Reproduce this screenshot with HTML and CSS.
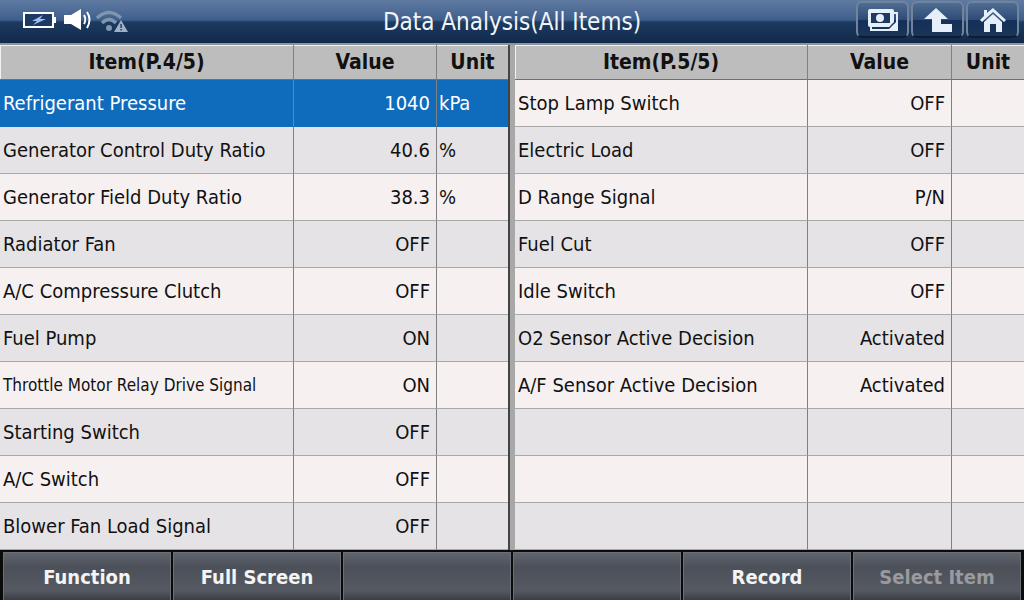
FILE: index.html
```html
<!DOCTYPE html>
<html lang="en">
<head>
<meta charset="utf-8">
<title>Data Analysis</title>
<link rel="stylesheet" href="styles.css">
</head>
<body>
<div class="app">
  <header class="topbar">
    <div class="status">
      <svg class="ic-batt" width="34" height="16" viewBox="0 0 34 16"><rect x="1" y="1" width="29" height="14" fill="#1c3a63" stroke="#fff" stroke-width="2"/><rect x="30" y="5" width="3" height="6" fill="#fff"/><path d="M20 3 L9 9 L14 9 L10 13 L23 7 L17 7 Z" fill="#9cc0f0"/></svg>
      <svg class="ic-vol" width="28" height="21" viewBox="0 0 28 21"><path d="M0 6 H7 L17 0 V21 L7 15 H0 Z" fill="#fff"/><path d="M20 6 Q22.5 10.5 20 15" fill="none" stroke="#fff" stroke-width="2"/><path d="M23 3 Q28 10.5 23 19" fill="none" stroke="#fff" stroke-width="2"/></svg>
      <svg class="ic-wifi" width="32" height="24" viewBox="0 0 32 24"><path d="M1 9 Q13 -2 25 9" fill="none" stroke="#7f95b0" stroke-width="3.5"/><path d="M6 14 Q13 7 20 14" fill="none" stroke="#7f95b0" stroke-width="3.5"/><circle cx="13" cy="19" r="3" fill="#7f95b0"/><path d="M25 11 L32 23 H18 Z" fill="#9fb1c6"/><rect x="24.400" y="15" width="1.400" height="4" fill="#1d3a60"/><rect x="24.400" y="20" width="1.400" height="1.500" fill="#1d3a60"/></svg>
    </div>
    <h1 class="title">Data Analysis(All Items)</h1>
    <nav class="tools">
      <button class="tool"><svg width="34" height="24" viewBox="0 0 34 24"><path d="M5 19 V22 H31 V5 H28" fill="none" stroke="#e4effa" stroke-width="2"/><rect x="2" y="1" width="26" height="18" rx="2" fill="#e4effa"/><rect x="5" y="5" width="19" height="10" fill="#1d3a60"/><circle cx="14" cy="10" r="4" fill="#e4effa"/><path d="M23 21 L31 13 V21 Z" fill="#e4effa"/><path d="M24 19 L29 14" stroke="#1d3a60" stroke-width="1.500"/></svg></button>
      <button class="tool"><svg width="30" height="26" viewBox="0 0 30 26"><path d="M1 12 L13 1 L25 12 H18 V17 H29 V25 H9 V12 Z" fill="#e4effa"/></svg></button>
      <button class="tool"><svg width="26" height="26" viewBox="0 0 26 26"><path d="M13 1 L26 13 L24 15 L13 5 L2 15 L0 13 L4 9 V3 H7 V6 Z" fill="#e4effa"/><path d="M4 15 L13 7 L22 15 V25 H16 V17 H10 V25 H4 Z" fill="#e4effa"/></svg></button>
    </nav>
  </header>
  <main class="tables">
    <section class="grid left">
      <div class="row head"><div class="c item">Item(P.4/5)</div><div class="c val">Value</div><div class="c unit">Unit</div></div>
      <div class="row sel"><div class="c item">Refrigerant Pressure</div><div class="c val">1040</div><div class="c unit">kPa</div></div>
      <div class="row"><div class="c item">Generator Control Duty Ratio</div><div class="c val">40.6</div><div class="c unit">%</div></div>
      <div class="row"><div class="c item">Generator Field Duty Ratio</div><div class="c val">38.3</div><div class="c unit">%</div></div>
      <div class="row"><div class="c item">Radiator Fan</div><div class="c val">OFF</div><div class="c unit"></div></div>
      <div class="row"><div class="c item">A/C Compressure Clutch</div><div class="c val">OFF</div><div class="c unit"></div></div>
      <div class="row"><div class="c item">Fuel Pump</div><div class="c val">ON</div><div class="c unit"></div></div>
      <div class="row"><div class="c item small">Throttle Motor Relay Drive Signal</div><div class="c val">ON</div><div class="c unit"></div></div>
      <div class="row"><div class="c item">Starting Switch</div><div class="c val">OFF</div><div class="c unit"></div></div>
      <div class="row"><div class="c item">A/C Switch</div><div class="c val">OFF</div><div class="c unit"></div></div>
      <div class="row"><div class="c item">Blower Fan Load Signal</div><div class="c val">OFF</div><div class="c unit"></div></div>
    </section>
    <div class="divider"></div>
    <section class="grid right">
      <div class="row head"><div class="c item">Item(P.5/5)</div><div class="c val">Value</div><div class="c unit">Unit</div></div>
      <div class="row"><div class="c item">Stop Lamp Switch</div><div class="c val">OFF</div><div class="c unit"></div></div>
      <div class="row"><div class="c item">Electric Load</div><div class="c val">OFF</div><div class="c unit"></div></div>
      <div class="row"><div class="c item">D Range Signal</div><div class="c val">P/N</div><div class="c unit"></div></div>
      <div class="row"><div class="c item">Fuel Cut</div><div class="c val">OFF</div><div class="c unit"></div></div>
      <div class="row"><div class="c item">Idle Switch</div><div class="c val">OFF</div><div class="c unit"></div></div>
      <div class="row"><div class="c item">O2 Sensor Active Decision</div><div class="c val">Activated</div><div class="c unit"></div></div>
      <div class="row"><div class="c item">A/F Sensor Active Decision</div><div class="c val">Activated</div><div class="c unit"></div></div>
      <div class="row"><div class="c item"></div><div class="c val"></div><div class="c unit"></div></div>
      <div class="row"><div class="c item"></div><div class="c val"></div><div class="c unit"></div></div>
      <div class="row"><div class="c item"></div><div class="c val"></div><div class="c unit"></div></div>
    </section>
  </main>
  <footer class="actions">
    <button class="act">Function</button>
    <button class="act">Full Screen</button>
    <button class="act"></button>
    <button class="act"></button>
    <button class="act">Record</button>
    <button class="act off">Select Item</button>
  </footer>
</div>
</body>
</html>
```
FILE: styles.css
```css
* { box-sizing: border-box; }
html, body { margin: 0; padding: 0; }
body { width: 1024px; height: 600px; overflow: hidden; background: #0b0b0b; font-family: "DejaVu Sans", "Noto Sans", sans-serif; font-stretch: condensed; }
.app { display: flex; flex-direction: column; width: 1024px; height: 600px; }

.topbar { height: 45px; flex: none; display: grid; grid-template-columns: 1fr auto 1fr; align-items: center; border-bottom: 2px solid #8e949b; background: linear-gradient(to bottom, #5f7ba2 0, #3f5f8c 20px, #1d3a60 22px, #112a4b 43px); }
.status { display: flex; align-items: center; padding: 0 0 4px 23px; }
.ic-batt { margin-right: 7px; }
.ic-vol { margin-right: 4px; }
.ic-wifi { margin-top: 2px; }
.title { margin: 0; font-size: 24px; font-weight: 400; color: #f2f5f8; white-space: nowrap; }
.tools { display: flex; justify-content: flex-end; gap: 2px; padding: 0 5px 4px 0; }
.tool { width: 53px; height: 37px; padding: 0; display: flex; align-items: center; justify-content: center; border: 2px solid #71849c; border-bottom-color: #0b1c33; border-radius: 6px; background: linear-gradient(to bottom, #4f6c94 0, #2e4c76 50%, #14305a 52%, #1a3557 100%); }

.tables { flex: none; height: 505px; display: grid; grid-template-columns: 508px 7px 509px; background: #bdbdbd; }
.divider { background: linear-gradient(to right, #444 0, #444 2px, #a8a8a8 2px); }
.grid { display: flex; flex-direction: column; }
.row { display: grid; height: 47px; font-size: 20px; color: #111; }
.left .row { grid-template-columns: 294px 143px 71px; }
.right .row { grid-template-columns: 293px 144px 72px; }
.row:nth-child(even) { background: #f7f0f0; }
.row:nth-child(odd) { background: #e6e3e6; }
.c { display: flex; align-items: center; border-bottom: 1px solid #a9a9a9; border-right: 1px solid #808080; white-space: nowrap; overflow: hidden; }
.c:last-child { border-right: 0; }
.item { padding-left: 3px; }
.small { font-size: 17px; }
.val { justify-content: flex-end; padding-right: 6px; }
.unit { padding-left: 2px; }
.row.head { height: 35px; background: #bdbdbd; font-weight: 700; font-size: 21px; box-shadow: inset 1px 1px 0 #f2f2f2; }
.head .c { justify-content: center; padding: 0; border-bottom: 1px solid #707070; }
.row.sel { background: #0f6cbd; color: #fff; }
.sel .c { border-bottom-color: #0f6cbd; }

.actions { flex: 1; display: grid; grid-template-columns: repeat(6, 170px); padding: 2px 0 0 2px; background: #0b0b0b; }
.act { height: 48px; padding: 0; margin-left: 1px; margin-right: 1px; border: 1px solid #6b6f78; border-bottom: 0; border-radius: 0; background: linear-gradient(to bottom, #60646e 0, #4c5059 30%, #555962 80%, #3a3d44 100%); color: #f4f4f4; font: 700 20px "DejaVu Sans", "Noto Sans", sans-serif; font-stretch: condensed; }
.act.off { color: #9a9a9e; }
```
